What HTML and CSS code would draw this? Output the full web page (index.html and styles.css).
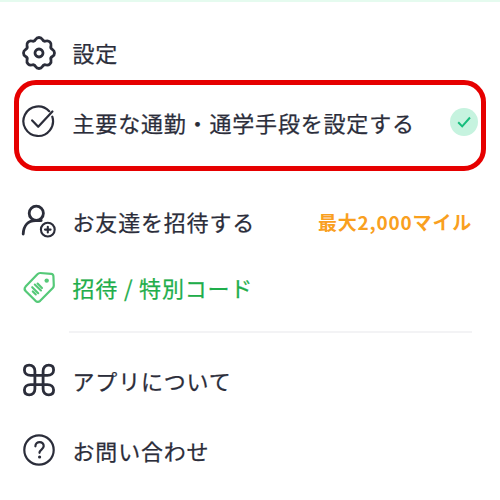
FILE: index.html
```
<!DOCTYPE html>
<html lang="ja">
<head>
<meta charset="utf-8">
<title>設定</title>
<link rel="stylesheet" href="styles.css">
</head>
<body>
<main class="menu">
  <div class="row settings">
    <svg class="icon" viewBox="-18 -18 36 36"><path d="M-3.4-13.6A4 4 0 0 1 3.4-13.6A3 3 0 0 0 7.2-12A4 4 0 0 1 12-7.2A3 3 0 0 0 13.6-3.4A4 4 0 0 1 13.6 3.4A3 3 0 0 0 12 7.2A4 4 0 0 1 7.2 12A3 3 0 0 0 3.4 13.6A4 4 0 0 1-3.4 13.6A3 3 0 0 0-7.2 12A4 4 0 0 1-12 7.2A3 3 0 0 0-13.6 3.4A4 4 0 0 1-13.6-3.4A3 3 0 0 0-12-7.2A4 4 0 0 1-7.2-12A3 3 0 0 0-3.4-13.6Z"/><circle r="4"/></svg>
    <span class="label">設定</span>
  </div>
  <div class="row commute">
    <svg class="icon thin" viewBox="-18 -18 36 36"><path d="M10.2-10.7A14.8 14.8 0 1 0 13.3-5.3M-6.8-1.6L-.8 4.8L13.4-10.5"/></svg>
    <span class="label">主要な通勤・通学手段を設定する</span>
    <svg class="done" viewBox="0 0 28 28"><circle cx="14" cy="14" r="14"/><path d="M8.2 14.3L12.2 18.4L20 9.5"/></svg>
  </div>
  <div class="row friends">
    <svg class="icon" viewBox="-18 -18 36 36"><circle cx="-2.7" cy="-7.7" r="7.1"/><path d="M-15.8 13C-15.4 4.4-10.5-.5-3.5-.5H2.2"/><circle cx="8.8" cy="8.6" r="6.9" class="fine"/><path class="fine" d="M6 8.6H11.6M8.8 5.8V11.4"/></svg>
    <span class="label">お友達を招待する</span>
    <strong class="reward">最大2,000マイル</strong>
  </div>
  <div class="row code">
    <svg class="icon tag" viewBox="-18 -18 36 36"><path d="M1.3-14L12.2-13.2Q14.2-13 14.4-11L14.8-1.8Q14.9-.2 13.8 1L1.2 13.8Q-1.2 15.8-3.5 13.8L-13.2 4.3Q-15.5 2-13.4-.4L-1.6-12.7Q-.4-14.1 1.3-14Z"/><circle class="dot" cx="7.7" cy="-6.4" r="2.2"/><path class="fine" d="M-6.8 .2L-.8 6.2M-4.2-2.5L2 3.5M-1.4-3.4L3 .9M-6.2 4.4L-3.2 7.4"/></svg>
    <span class="label">招待 / 特別コード</span>
  </div>
  <hr class="rule">
  <div class="row about">
    <svg class="icon" viewBox="-18 -18 36 36"><path d="M-4.1-4.6H4.1M4.1 4.6H-4.1M-4.1-4.6V4.6M4.1-4.6V4.6M-4.1-4.6H-8.5C-12-4.6-14.6-6.7-14.6-10C-14.6-13-12.7-14.8-9.8-14.8C-6.3-14.8-4.1-12.4-4.1-9ZM4.1-4.6H8.5C12-4.6 14.6-6.7 14.6-10C14.6-13 12.7-14.8 9.8-14.8C6.3-14.8 4.1-12.4 4.1-9ZM4.1 4.6H8.5C12 4.6 14.6 6.7 14.6 10C14.6 13 12.7 14.8 9.8 14.8C6.3 14.8 4.1 12.4 4.1 9ZM-4.1 4.6H-8.5C-12 4.6-14.6 6.7-14.6 10C-14.6 13-12.7 14.8-9.8 14.8C-6.3 14.8-4.1 12.4-4.1 9Z"/></svg>
    <span class="label">アプリについて</span>
  </div>
  <div class="row contact">
    <svg class="icon thin" viewBox="-18 -18 36 36"><circle r="14.7"/><path d="M-3.6-3.7C-3.6-9.3 5-9.3 4.7-3.9C4.5-.4.5-.5.5 2.8"/><circle class="dot" cx=".6" cy="7" r="1.6"/></svg>
    <span class="label">お問い合わせ</span>
  </div>
</main>
</body>
</html>
```
FILE: styles.css
```
* { box-sizing: border-box; }
body {
  margin: 0;
  background: #fff;
  color: #2b2d3a;
  font-family: "Noto Sans CJK JP", sans-serif;
}
.menu {
  height: 500px;
  border-top: 2px solid #e5fbef;
  padding: 17px 14px 0;
  overflow: hidden;
}
.row {
  display: flex;
  align-items: center;
  height: 69px;
  padding: 0 14px 0 7px;
}
.icon {
  flex: none;
  width: 36px;
  height: 36px;
  margin-right: 15.5px;
  fill: none;
  stroke: currentColor;
  stroke-width: 2.8;
  stroke-linecap: round;
  stroke-linejoin: round;
}
.thin { stroke-width: 2.2; }
.fine { stroke-width: 2.1; }
.dot { fill: currentColor; stroke: none; }
.label {
  font-size: 22px;
  line-height: 32px;
  letter-spacing: 0.82px;
  white-space: nowrap;
  -webkit-text-stroke: 0.25px currentColor;
}
.settings { height: 61px; padding-top: 6px; }
.settings .label { padding-bottom: 2px; }
.commute {
  height: 91px;
  border: 5px solid #e60000;
  border-radius: 22px;
  padding: 0 3px 7px 2px;
}
.commute .label { padding-bottom: 1px; }
.done {
  flex: none;
  width: 28px;
  height: 28px;
  margin-left: auto;
  fill: #c6f3df;
}
.done path {
  fill: none;
  stroke: #16bd7c;
  stroke-width: 2;
}
.friends { height: 66px; margin-top: 17px; }
.reward {
  margin-left: auto;
  color: #f9a01f;
  font-size: 19px;
  letter-spacing: 0.8px;
}
.code { height: 66px; color: #1fae4b; }
.tag { color: #55c978; stroke-width: 2.2; }
.rule {
  height: 2px;
  margin: 11px 14px 12px 55px;
  border: 0;
  background: #f3f3f5;
}
.contact { padding-top: 2px; }
```
